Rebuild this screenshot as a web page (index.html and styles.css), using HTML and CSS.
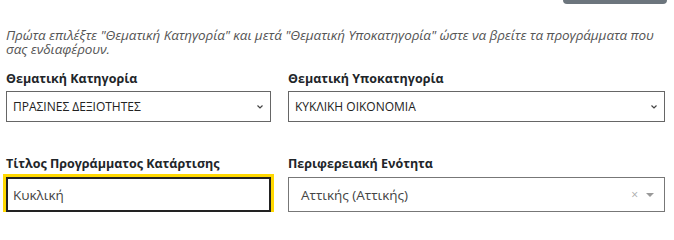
FILE: index.html
```html
<!DOCTYPE html>
<html lang="el">
<head>
<meta charset="utf-8">
<link rel="stylesheet" href="styles.css">
</head>
<body>
<div class="page">
  <div class="topbar"><div class="btn-stub"></div></div>
  <p class="hint">Πρώτα επιλέξτε "Θεματική Κατηγορία" και μετά "Θεματική Υποκατηγορία" ώστε να βρείτε τα προγράμματα που σας ενδιαφέρουν.</p>
  <div class="grid row1">
    <div class="field">
      <label class="lbl">Θεματική Κατηγορία</label>
      <div class="select">
        <span class="val">ΠΡΑΣΙΝΕΣ ΔΕΞΙΟΤΗΤΕΣ</span>
        <svg class="chev" width="8" height="6" viewBox="0 0 8 6"><path d="M1.5 1.5 L4 4 L6.5 1.5" fill="none" stroke="#444" stroke-width="1.2"/></svg>
      </div>
    </div>
    <div class="field">
      <label class="lbl">Θεματική Υποκατηγορία</label>
      <div class="select">
        <span class="val">ΚΥΚΛΙΚΗ ΟΙΚΟΝΟΜΙΑ</span>
        <svg class="chev" width="8" height="6" viewBox="0 0 8 6"><path d="M1.5 1.5 L4 4 L6.5 1.5" fill="none" stroke="#444" stroke-width="1.2"/></svg>
      </div>
    </div>
  </div>
  <div class="grid row2">
    <div class="field">
      <label class="lbl">Τίτλος Προγράμματος Κατάρτισης</label>
      <div class="input focus"><span class="ival">Κυκλική</span></div>
    </div>
    <div class="field">
      <label class="lbl">Περιφερειακή Ενότητα</label>
      <div class="s2">
        <span class="s2val">Αττικής (Αττικής)</span>
        <span class="s2clear">×</span>
        <span class="s2arrow"></span>
      </div>
    </div>
  </div>
</div>
</body>
</html>
```
FILE: styles.css
```css
html, body { margin: 0; padding: 0; background: #fff; }
body { font-family: "Open Sans", "Noto Sans", sans-serif; color: #212529; }
.page { width: 659px; padding-left: 6px; }
.topbar { display: flex; justify-content: flex-end; height: 4px; }
.btn-stub { width: 104px; height: 4px; background: #6c757d; border-radius: 0 0 4px 4px; margin-right: -2px; }
.hint { width: 662px; margin: 24px 0 0 0; font-style: italic; font-size: 13.5px; line-height: 14px; color: #555; letter-spacing: -0.1px; }
.grid { display: grid; grid-template-columns: 265px 1fr; column-gap: 17px; }
.row1 { margin-top: 14px; }
.row2 { margin-top: 33px; }
.lbl { display: block; font-weight: bold; font-size: 12.5px; line-height: 18px; color: #212529; margin-bottom: 3px; }
.row2 .lbl { margin-bottom: 4px; }
.select { box-sizing: border-box; height: 31px; border: 1px solid #666; display: flex; align-items: center; padding: 0 6px 0 6px; justify-content: space-between; }
.val { font-size: 12px; color: #222; }
.chev { display: block; }
.input { box-sizing: border-box; height: 35px; border: 2px solid #222; display: flex; align-items: center; padding-left: 5px; }
.input.focus { outline: 3px solid #ffd800; }
.ival { font-size: 13.5px; color: #444; }
.s2 { box-sizing: border-box; height: 35px; border: 1px solid #777; display: flex; align-items: center; padding: 0 10px 0 12px; }
.s2val { font-size: 13.5px; color: #444; flex: 1; }
.s2clear { font-size: 12px; color: #aaa; margin-right: 8px; }
.s2arrow { width: 0; height: 0; border-left: 4px solid transparent; border-right: 4px solid transparent; border-top: 4px solid #999; margin-top: 1px; }
```
